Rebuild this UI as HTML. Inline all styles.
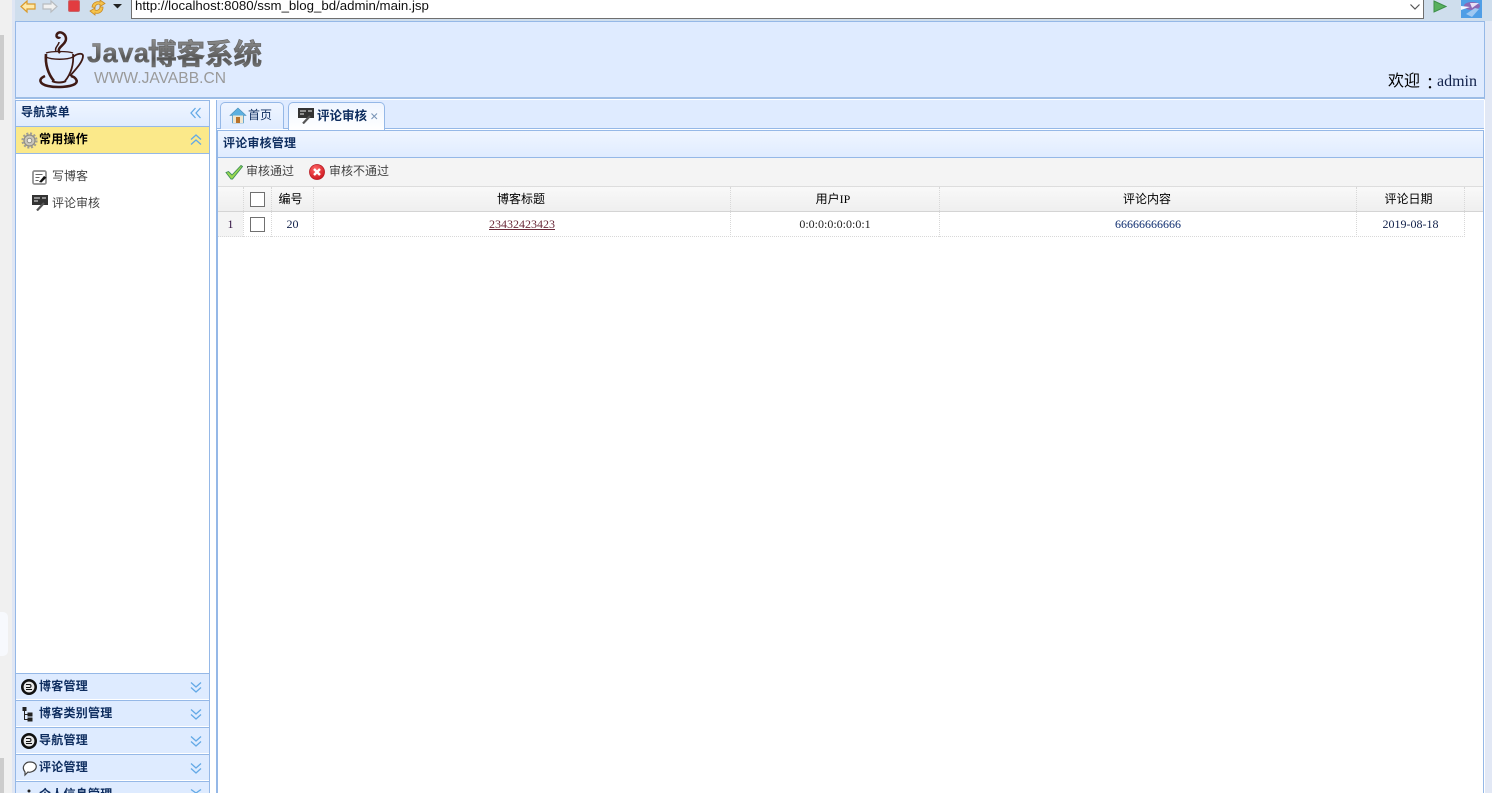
<!DOCTYPE html>
<html lang="zh"><head><meta charset="utf-8"><title>Java博客系统</title>
<style>
html,body{margin:0;padding:0;width:1492px;height:793px;overflow:hidden;background:#fff}
body{position:relative;font:12px "Liberation Serif","WenQuanYi Zen Hei","Noto Sans CJK SC",serif;color:#000}
.a{position:absolute;box-sizing:border-box}
.t{position:absolute;white-space:nowrap;line-height:16px;height:16px}
.cj{font-family:"WenQuanYi Zen Hei","Noto Sans CJK SC",sans-serif}
.b{font-weight:bold;color:#0e2d5f}
.hd{left:16px;width:193px;height:26px;background:#deebff;border-top:1px solid #95b8e7}
.hd .t{left:23px;top:4px;font-size:12px;letter-spacing:.25px}
.ck{position:absolute;width:15px;height:15px;border:1px solid #707070;background:#fff;box-sizing:border-box}
.v{position:absolute;width:1px;border-left:1px dotted #d8d8d8}
.c{position:absolute;text-align:center;line-height:16px;white-space:nowrap}
</style></head><body>
<!-- outer left strip -->
<div class="a" style="left:0;top:0;width:12px;height:793px;background:#f0f0f0"></div>
<div class="a" style="left:0;top:35px;width:4px;height:85px;background:#ccc"></div>
<div class="a" style="left:0;top:758px;width:4px;height:35px;background:#ccc"></div>
<div class="a" style="left:0;top:612px;width:8px;height:44px;background:#f7f9fd;border-radius:0 5px 5px 0"></div>
<div class="a" style="left:12px;top:0;width:4px;height:793px;background:#dfe6f4"></div>
<div class="a" style="left:1484px;top:0;width:8px;height:793px;background:#e2e8f5"></div>
<!-- browser toolbar -->
<div class="a" style="left:15px;top:0;width:1477px;height:21px;background:#cfdeed"></div>
<svg class="a" style="left:20px;top:0" width="110" height="16" viewBox="0 0 110 16">
<path d="M1 6.500L7 1V4H15V9H7V12Z" fill="#ffe9a8" stroke="#d99a2b" stroke-width="1.200"/>
<path d="M37 6.500L31 1V4H23V9H31V12Z" fill="#f1f1f1" stroke="#b8bcc0" stroke-width="1.200"/>
<rect x="48.500" y="0.500" width="11" height="11" rx="1.500" fill="#e23c40" stroke="#c9656b"/>
<path d="M72 7a6 6 0 0 1 8-5V0l5 3.500-5 3V4.500a3.500 3.500 0 0 0-5 3Z" fill="#f5c34c" stroke="#c98a22" stroke-width=".8"/>
<path d="M83 7a6 6 0 0 1-8 6v2l-5-4 5-3v2a3.500 3.500 0 0 0 5-3Z" fill="#f5c34c" stroke="#c98a22" stroke-width=".8"/>
<path d="M93 4H102L97.500 8.500Z" fill="#222"/>
</svg>
<div class="a" style="left:131px;top:-1px;width:1293px;height:20px;background:#fff;border:1px solid #6f6f6f"></div>
<div class="t" style="left:135px;top:-2px;font:13.250px/16px 'Liberation Sans',sans-serif;color:#111">http://localhost:8080/ssm_blog_bd/admin/main.jsp</div>
<svg class="a" style="left:1409px;top:3px" width="12" height="8"><path d="M1.500 1.500L6 6L10.500 1.500" fill="none" stroke="#555" stroke-width="1.200"/></svg>
<svg class="a" style="left:1433px;top:0" width="14" height="13"><path d="M1 1L13 6.500L1 12Z" fill="#58b05e" stroke="#3c8f48"/></svg>
<svg class="a" style="left:1461px;top:0" width="21" height="18" viewBox="0 0 21 18"><rect width="21" height="18" fill="#4f9ee6"/><ellipse cx="11" cy="6" rx="8" ry="4" fill="#8a68b5"/><path d="M0 6L9 7 0 10Z" fill="#f4f8ff"/><path d="M9 3H18L11 8Z" fill="#e9dff5"/><path d="M5 14L14 8l4 1-7 8Z" fill="#9fc8f2"/></svg>
<!-- header -->
<div class="a" style="left:15px;top:21px;width:1470px;height:78px;background:#dfebff;border:1px solid #95b8e7;border-bottom:2px solid #9dbde6"></div>
<svg class="a" style="left:36px;top:26px" width="232" height="66" viewBox="0 0 232 66">
<defs><linearGradient id="g" x1="0" y1="0" x2="0" y2="1"><stop offset="0" stop-color="#a0a0a0"/><stop offset=".5" stop-color="#6b6b6b"/><stop offset=".65" stop-color="#555"/><stop offset="1" stop-color="#8c8c8c"/></linearGradient></defs>
<g fill="none" stroke="#3f1a15">
<path d="M24 27c-5-5 6-8 6-14 0-5-6-9-9-5-2 3 2 5 3 3" stroke-width="2.500"/>
<path d="M20 25c-2-3 3-6 3-9" stroke-width="1.500"/>
<path d="M10 27c5-2 22-2 27 0" stroke-width="1.300"/>
<path d="M10 31c6 3 21 3 27 0" stroke-width="1.500"/>
<path d="M10 28c-1 10 2 20 8 27" stroke-width="2.600"/>
<path d="M37 28c1 10-2 20-8 27" stroke-width="1.800"/>
<path d="M37 31c3-3 10-5 10-1 0 6-8 14-13 20" stroke-width="1.800"/>
<path d="M9 50c-7 3-6 8 3 10 9 2 22 1 27-2 4-3 0-7-4-8" stroke-width="2.500"/>
<path d="M16 55c4 2 10 2 14 0" stroke-width="2"/>
</g>
<text x="51" y="36" font-family="Liberation Sans,sans-serif" font-weight="bold" font-size="27" letter-spacing=".6" fill="url(#g)" stroke="#666" stroke-width=".5">Java</text>
<text x="112" y="38" font-family="WenQuanYi Zen Hei,Noto Sans CJK SC,sans-serif" font-weight="bold" font-size="28.500" fill="url(#g)" stroke="#666" stroke-width=".7">博客系统</text>
<text x="58" y="57" font-family="Liberation Sans,sans-serif" font-size="15.600" fill="#9a9a9a">WWW.JAVABB.CN</text>
</svg>
<div class="t" style="left:1388px;top:73px;font-size:16px;line-height:18px;height:18px">欢迎</div>
<div class="t" style="left:1422px;top:73px;font:16px/18px 'Noto Sans CJK TC',sans-serif;height:18px">：</div>
<div class="t" style="left:1437px;top:73px;font-size:16px;line-height:18px;height:18px;color:#10204a">admin</div>
<!-- sidebar -->
<div class="a" style="left:15px;top:100px;width:195px;height:693px;background:#fff;border:1px solid #95b8e7;border-bottom:0"></div>
<div class="a" style="left:16px;top:101px;width:193px;height:25px;background:linear-gradient(#eff5ff,#e0ecff)"></div>
<div class="t cj b" style="left:21px;top:104px;font-size:12px;letter-spacing:.25px">导航菜单</div>
<svg class="a" style="left:190px;top:107px" width="12" height="12"><path d="M5.500 1L1 6l4.500 5M10.500 1L6 6l4.500 5" fill="none" stroke="#63a9e6" stroke-width="1.300"/></svg>
<div class="a" style="left:16px;top:126px;width:193px;height:28px;background:#fbe98a;border-top:1px solid #95b8e7;border-bottom:1px solid #95b8e7"></div>
<svg class="a" style="left:21px;top:132px" width="17" height="17" viewBox="0 0 17 17"><circle cx="8.500" cy="8.500" r="5.500" fill="#c9c6bb" stroke="#8f8d85" stroke-width="1.200"/><circle cx="8.500" cy="8.500" r="7" fill="none" stroke="#a09e95" stroke-width="2.200" stroke-dasharray="2 1.700"/><circle cx="8.500" cy="8.500" r="2.300" fill="#f2f0e8" stroke="#8f8d85"/></svg>
<div class="t cj" style="left:39px;top:131px;font-size:12px;font-weight:bold;color:#000;letter-spacing:.25px">常用操作</div>
<svg class="a" style="left:190px;top:134px" width="12" height="12"><path d="M1 5.500L6 1l5 4.500M1 10.500L6 6l5 4.500" fill="none" stroke="#63a9e6" stroke-width="1.300"/></svg>
<svg class="a" style="left:32px;top:170px" width="16" height="15" viewBox="0 0 16 15"><rect x="1" y="1" width="13" height="13" rx="1.500" fill="#fff" stroke="#8c8c8c" stroke-width="1.700"/><path d="M3.500 4.500h7M3.500 7.500h4M3.500 10.500h3" stroke="#666"/><path d="M7 12l5-6 2.500 1.500-5 5Z" fill="#111"/></svg>
<div class="t cj" style="left:52px;top:168px;color:#444">写博客</div>
<svg class="a" style="left:32px;top:195px" width="16" height="16" viewBox="0 0 16 16"><rect width="16" height="10" fill="#333"/><path d="M2 3H8M10 3H14M2 6H6" stroke="#eee"/><path d="M5 15.500L12 8" stroke="#555" stroke-width="2.200"/></svg>
<div class="t cj" style="left:52px;top:195px;color:#444">评论审核</div>
<!-- accordion footer -->
<div class="a hd" style="top:673px"><div class="t cj b">博客管理</div></div>
<div class="a hd" style="top:700px"><div class="t cj b">博客类别管理</div></div>
<div class="a hd" style="top:727px"><div class="t cj b">导航管理</div></div>
<div class="a hd" style="top:754px"><div class="t cj b">评论管理</div></div>
<div class="a hd" style="top:781px;height:12px"><div class="t cj b">个人信息管理</div></div>
<svg class="a" style="left:190px;top:681px" width="12" height="100"><g fill="none" stroke="#63a9e6" stroke-width="1.300"><path d="M1 1.500L6 6l5-4.500M1 6.500L6 11l5-4.500"/><path d="M1 28.500L6 33l5-4.500M1 33.500L6 38l5-4.500"/><path d="M1 55.500L6 60l5-4.500M1 60.500L6 65l5-4.500"/><path d="M1 82.500L6 87l5-4.500M1 87.500L6 92l5-4.500"/></g></svg>
<svg class="a" style="left:190px;top:789px" width="12" height="4"><path d="M1 .5L6 4l5-3.500" fill="none" stroke="#63a9e6" stroke-width="1.300"/></svg>
<svg class="a" style="left:21px;top:679px" width="17" height="114" viewBox="0 0 17 114">
<circle cx="8" cy="8" r="6.700" fill="#e8e8e8" stroke="#111" stroke-width="2.600"/><path d="M5 5.500h3.500a1.500 1.500 0 0 1 0 3H5M5 10.500h6" stroke="#111" fill="none"/>
<path d="M2 28.500h3v3H2ZM7 34h4v3H7ZM7 39h4v3H7Z" fill="#222" stroke="#222"/><path d="M3.500 31V40.500H7M3.500 35.500H7" stroke="#222" fill="none"/>
<circle cx="8" cy="62" r="6.700" fill="#e8e8e8" stroke="#111" stroke-width="2.600"/><path d="M5 59.500h3.500a1.500 1.500 0 0 1 0 3H5M5 64.500h6" stroke="#111" fill="none"/>
<path d="M4 93c-4-5 0-10 5-10s7 3 6 6-6 5-8 4l-3 3Z" fill="#fff" stroke="#444" stroke-width="1.200"/>
<path d="M8 110.500a1.500 1.500 0 1 1 0 3 1.500 1.500 0 1 1 0-3Z" fill="#222"/>
</svg>
<!-- main -->
<div class="a" style="left:216px;top:100px;width:1269px;height:693px;background:#fff;border-left:1px solid #95b8e7"></div>
<div class="a" style="left:217px;top:100px;width:1267px;height:29px;background:#dfebff;border-bottom:1px solid #95b8e7"></div>
<div class="a" style="left:220px;top:102px;width:64px;height:27px;background:linear-gradient(#eff5ff,#e0ecff);border:1px solid #95b8e7;border-bottom:0;border-radius:5px 5px 0 0"></div>
<svg class="a" style="left:229px;top:107px" width="18" height="17" viewBox="0 0 18 17"><path d="M9 1L1 8.500h2.500V16h11V8.500H17Z" fill="#5db0e0" stroke="#4a8fb8" stroke-width=".6"/><rect x="4" y="8.500" width="10" height="7.500" fill="#efe6cf"/><rect x="7" y="10" width="4" height="6" fill="#b8722a"/></svg>
<div class="t cj" style="left:248px;top:107px;font-size:12px;color:#0e2d5f">首页</div>
<div class="a" style="left:288px;top:102px;width:97px;height:28px;background:linear-gradient(#eff5ff,#fff);border:1px solid #95b8e7;border-bottom:0;border-radius:5px 5px 0 0"></div>
<svg class="a" style="left:298px;top:108px" width="16" height="16" viewBox="0 0 16 16"><rect width="16" height="10" fill="#333"/><path d="M2 3H8M10 3H14M2 6H6" stroke="#eee"/><path d="M5 15.500L12 8" stroke="#555" stroke-width="2.200"/></svg>
<div class="t cj b" style="left:317px;top:107px;font-size:12.500px">评论审核</div>
<svg class="a" style="left:371px;top:113px" width="7" height="7"><path d="M.5.500L6 6M6 .5L.5 6" stroke="#7b96b8" stroke-width="1.100"/></svg>
<!-- panel -->
<div class="a" style="left:217px;top:130px;width:1267px;height:663px;border:1px solid #95b8e7;border-bottom:0;background:#fff"></div>
<div class="a" style="left:218px;top:131px;width:1265px;height:27px;background:linear-gradient(#eff5ff,#e0ecff);border-bottom:1px solid #95b8e7"></div>
<div class="t cj b" style="left:223px;top:135px;font-size:12px;letter-spacing:.2px">评论审核管理</div>
<div class="a" style="left:218px;top:158px;width:1265px;height:29px;background:#f4f4f4;border-bottom:1px solid #ddd"></div>
<svg class="a" style="left:225px;top:164px" width="18" height="16" viewBox="0 0 18 16"><path d="M1 8.500l2.500-1 3.500 3.500L16 1.500 17.500 2.500 7.500 15H6Z" fill="#9ad94f" stroke="#3f8f5a" stroke-width=".9"/></svg>
<div class="t cj" style="left:246px;top:163px;color:#444">审核通过</div>
<svg class="a" style="left:309px;top:164px" width="16" height="16" viewBox="0 0 16 16"><defs><radialGradient id="r" cx=".4" cy=".3" r=".8"><stop offset="0" stop-color="#f66"/><stop offset="1" stop-color="#c80f18"/></radialGradient></defs><circle cx="8" cy="8" r="7.600" fill="url(#r)" stroke="#b01820" stroke-width=".6"/><path d="M5 5l6 6M11 5l-6 6" stroke="#fff" stroke-width="2.400"/></svg>
<div class="t cj" style="left:329px;top:163px;color:#444">审核不通过</div>
<!-- grid header -->
<div class="a" style="left:218px;top:187px;width:1265px;height:25px;background:linear-gradient(#f9f9f9,#efefef);border-bottom:1px solid #d4d4d4"></div>
<div class="a" style="left:218px;top:212px;width:25px;height:25px;background:#f4f4f4"></div>
<div class="v" style="left:243px;top:187px;height:50px"></div>
<div class="v" style="left:271px;top:187px;height:50px"></div>
<div class="v" style="left:313px;top:187px;height:50px"></div>
<div class="v" style="left:730px;top:187px;height:50px"></div>
<div class="v" style="left:939px;top:187px;height:50px"></div>
<div class="v" style="left:1356px;top:187px;height:50px"></div>
<div class="v" style="left:1464px;top:187px;height:50px"></div>
<div class="a" style="left:218px;top:236px;width:1247px;height:1px;border-top:1px dotted #d8d8d8"></div>
<div class="ck" style="left:250px;top:192px"></div>
<div class="ck" style="left:250px;top:217px"></div>
<div class="c cj" style="left:272px;top:191px;width:37px">编号</div>
<div class="c cj" style="left:313px;top:191px;width:416px">博客标题</div>
<div class="c" style="left:729px;top:191px;width:208px">用户IP</div>
<div class="c cj" style="left:939px;top:191px;width:416px">评论内容</div>
<div class="c cj" style="left:1355px;top:191px;width:107px">评论日期</div>
<div class="c" style="left:218px;top:216px;width:25px;color:#301040">1</div>
<div class="c" style="left:272px;top:216px;width:41px;color:#10204a">20</div>
<div class="c" style="left:314px;top:216px;width:416px;color:#6b2a3a;text-decoration:underline">23432423423</div>
<div class="c" style="left:731px;top:216px;width:208px;color:#222">0:0:0:0:0:0:0:1</div>
<div class="c" style="left:940px;top:216px;width:416px;color:#0e2d6f">66666666666</div>
<div class="c" style="left:1357px;top:216px;width:107px;color:#10204a">2019-08-18</div>
</body></html>
